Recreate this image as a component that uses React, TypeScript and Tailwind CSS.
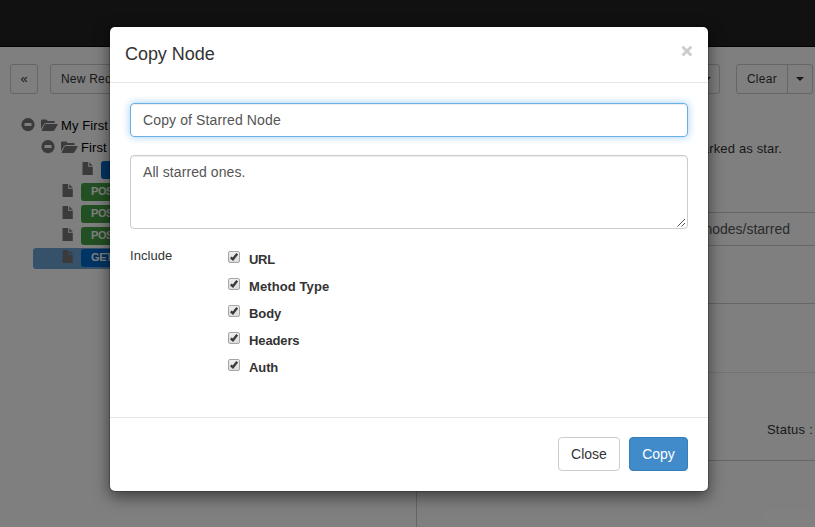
import React from "react";

const options = [
  { label: "URL", tracking: "tracking-[-0.3px]" },
  { label: "Method Type", tracking: "tracking-[0.1px]" },
  { label: "Body", tracking: "tracking-[-0.1px]" },
  { label: "Headers", tracking: "tracking-[-0.12px]" },
  { label: "Auth", tracking: "tracking-[-0.1px]" },
];

function Minus() {
  return (
    <svg width="14" height="14" viewBox="0 0 14 14" className="shrink-0">
      <circle cx="7" cy="6.7" r="6.6" fill="#777" />
      <rect x="3.5" y="5" width="7" height="3" rx="0.5" fill="#fff" />
    </svg>
  );
}

function Folder() {
  return (
    <svg width="17" height="13" viewBox="0 0 17 13" className="shrink-0">
      <path d="M0 10V1.7Q0 0.6 1.2 0.6H5.3L6.7 2.1H12.7Q13.7 2.1 13.7 3.1V4H5.2Q3.6 4 2.8 5.5Z" fill="#777" />
      <path d="M4.7 5H16.2Q17 5 16.6 5.8L13.5 11.2Q13 12 12 12H0.9Q0.3 12 0.7 11.3L3.4 6Q3.8 5 4.7 5Z" fill="#777" />
    </svg>
  );
}

function Doc() {
  return (
    <svg width="11" height="13" viewBox="0 0 11 13" className="shrink-0">
      <path d="M0.5 0H6.2V4.7H10.8V13H0.5Z" fill="#777" />
      <path d="M7.2 0.2L10.8 3.8H7.2Z" fill="#777" />
    </svg>
  );
}

function Caret() {
  return <span className="border-x-4 border-t-4 border-x-transparent border-t-[#333]" />;
}

function Check() {
  return (
    <span className="flex h-[12px] w-[12px] items-center justify-center rounded-[2px] border border-[#a6a6a6] bg-linear-to-b from-[#eee] to-[#dcdcdc]">
      <svg width="10" height="10" viewBox="0 0 10 10" className="shrink-0">
        <path d="M1.8 5.4L3.9 7.3L8.2 1.8" fill="none" stroke="#3b3b3b" strokeWidth="2.4" />
      </svg>
    </span>
  );
}

function Request({ method, color }: { method: string; color: string }) {
  return (
    <div className="flex h-[22px] items-center pl-[62px]">
      <span className="mb-[2px] flex"><Doc /></span>
      <span className={`ml-2 mt-px flex h-[18px] w-[50px] items-center rounded-[3px] pl-[10px] text-[11px] font-bold tracking-[-0.4px] text-white ${color}`}>
        {method}
      </span>
    </div>
  );
}

function Workspace() {
  return (
    <div className="flex h-[527px] w-[815px] flex-col overflow-hidden bg-white text-[13px] text-[#333]">
      <div className="h-[47px] shrink-0 border-b border-[#080808] bg-[#222]" />
      <div className="flex grow">
        <aside className="w-[417px] shrink-0 border-r border-[#ccc] pt-[17px]">
          <div className="flex gap-3 pl-[10px]">
            <div className="flex h-[30px] w-7 items-center justify-center rounded-[3px] border border-[#ccc] pb-px">«</div>
            <div className="flex h-[30px] w-[110px] items-center rounded-[3px] border border-[#ccc] pl-[10px] pb-px text-xs tracking-[0.2px]">New Request</div>
          </div>
          <div className="pt-[20px] text-[#000]">
            <div className="flex h-[22px] items-center pl-[21px]">
              <Minus />
              <span className="ml-[6px] flex"><Folder /></span>
              <span className="ml-[3px] pt-px tracking-[0.1px]">My First Project</span>
            </div>
            <div className="flex h-[22px] items-center pl-[41px]">
              <Minus />
              <span className="ml-[6px] flex"><Folder /></span>
              <span className="ml-[3px] pt-px tracking-[0.1px]">First Folder</span>
            </div>
            <div className="pl-5"><Request method="GET" color="bg-[#0068c8]" /></div>
            <Request method="POST" color="bg-[#44a044]" />
            <Request method="POST" color="bg-[#44a044]" />
            <Request method="POST" color="bg-[#44a044]" />
            <div className="mt-[2px] ml-[33px] flex h-[21px] items-start rounded-[3px] bg-[#6ca4d6]">
              <div className="-mt-[2px] -ml-[33px]"><Request method="GET" color="bg-[#0068c8]" /></div>
            </div>
          </div>
        </aside>
        <main className="flex grow flex-col pt-[17px]">
          <div className="flex justify-end pr-[2px]">
            <div className="mr-4 flex h-[30px] w-[26px] items-center justify-center rounded-r-[3px] border border-[#ccc]"><Caret /></div>
            <div className="flex h-[30px] w-[52px] items-center justify-center rounded-l-[3px] border border-[#ccc] pb-px text-xs tracking-[0.3px]">Clear</div>
            <div className="-ml-px flex h-[30px] w-[26px] items-center justify-center rounded-r-[3px] border border-[#ccc]"><Caret /></div>
          </div>
          <div className="flex h-[118px] items-center justify-end pr-[33px] pb-[9px] tracking-[0.15px]">Returns all nodes marked as star.</div>
          <div className="flex h-[34px] items-center justify-end border-y border-[#ccc] pr-[25px] text-sm text-[#555]">api.example.com/nodes/starred</div>
          <div className="h-[58px] border-b border-[#ccc]" />
          <div className="h-[69px] border-b border-[#e5e5e5]" />
          <div className="flex h-[88px] items-center justify-end border-b border-[#ccc] pr-[2px] pt-[27px] tracking-[0.25px]">Status :</div>
        </main>
      </div>
    </div>
  );
}

export default function App() {
  return (
    <div className="relative h-[527px] w-[815px] overflow-hidden font-['Liberation_Sans',Arial,sans-serif]">
      <Workspace />
      <div className="absolute inset-0 bg-black/50 pl-[110px] pt-[27px]">
        <section className="flex h-[464px] w-[598px] flex-col rounded-[5px] bg-white text-[#333] shadow-[0_5px_15px_1px_rgba(0,0,0,0.5),0_0_0_1px_rgba(0,0,0,0.2)]">
          <header className="flex h-14 items-center justify-between border-b border-[#e5e5e5] px-[15px]">
            <h4 className="pb-[2px] text-lg leading-5 tracking-[-0.05px]">Copy Node</h4>
            <svg width="12" height="12" viewBox="0 0 12 12" className="mb-[8px]">
              <path d="M1.5 1.7L10.3 10.5M10.3 1.7L1.5 10.5" stroke="#ccc" strokeWidth="2.9" />
            </svg>
          </header>
          <div className="grow px-5 pt-5">
            <div className="flex h-[34px] items-center rounded-[4px] border border-[#66afe9] px-3 text-sm tracking-[0.12px] text-[#555] shadow-[inset_0_1px_1px_rgba(0,0,0,0.075),0_0_8px_rgba(102,175,233,0.6)]">Copy of Starred Node</div>
            <div className="mt-[18px] flex h-[74px] rounded-[4px] border border-[#ccc] pt-[6px] pl-3 text-sm leading-5 tracking-[0.08px] text-[#555] shadow-[inset_0_1px_1px_rgba(0,0,0,0.075)]">
              <span className="grow">All starred ones.</span>
              <svg width="9" height="9" viewBox="0 0 9 9" className="mr-[1px] mb-px self-end">
                <path d="M0.5 8.5L8 1M4.5 8.5L8 5" stroke="#555" strokeWidth="1" />
              </svg>
            </div>
            <div className="flex pt-[18px] text-[13px]">
              <span className="w-[98px] leading-[18px] tracking-[0.05px]">Include</span>
              <div className="pt-[3px]">
                {options.map(({ label, tracking }) => (
                  <div key={label} className="flex h-[27px]">
                    <span className="pt-px"><Check /></span>
                    <span className={`ml-[9px] pt-[1px] text-[13px] leading-[18px] font-bold ${tracking}`}>{label}</span>
                  </div>
                ))}
              </div>
            </div>
          </div>
          <footer className="flex h-[74px] justify-end gap-[9px] border-t border-[#e5e5e5] px-5 pt-[19px] text-sm">
            <button className="h-[34px] w-[62px] rounded-[4px] border border-[#ccc] bg-white">Close</button>
            <button className="h-[34px] w-[59px] rounded-[4px] border border-[#357ebd] bg-[#428bca] text-white">Copy</button>
          </footer>
        </section>
      </div>
    </div>
  );
}
